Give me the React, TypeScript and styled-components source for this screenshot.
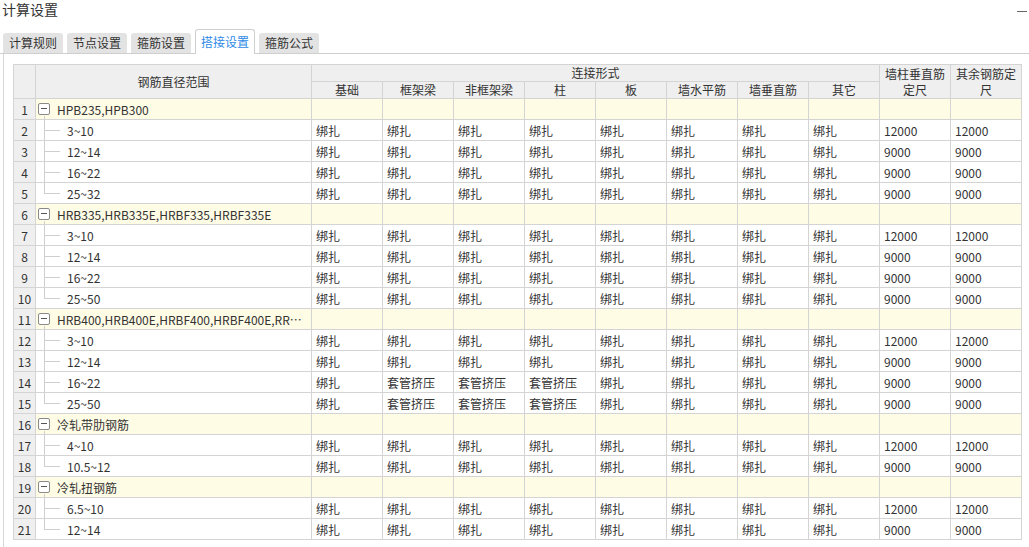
import React from 'react';
import styled, {createGlobalStyle, css} from 'styled-components';

const GlobalStyle = createGlobalStyle`
    html, body {
        margin: 0;
        padding: 0;
        background: #fff;
    }
    body {
        font-family: "Microsoft YaHei", "Noto Sans CJK SC", "Noto Sans", sans-serif;
        color: #333;
    }
`;

const Window = styled.div`
    width: 1029px;
    height: 547px;
    display: flex;
    flex-direction: column;
    overflow: hidden;
`;

const TitleBar = styled.div`
    height: 29px;
    display: flex;
    justify-content: space-between;
    padding-left: 2px;
    font-size: 14px;
    line-height: 18px;
    color: #333;
`;

const MinButton = styled.div`
    width: 10px;
    height: 1px;
    margin: 11px 2px 0 0;
    background: #666;
`;

const TabBar = styled.div`
    height: 24px;
    display: flex;
    align-items: flex-end;
    gap: 4px;
    padding-left: 3px;
    border-bottom: 1px solid #cfcfcf;
`;

const Tab = styled.div<{ $active?: boolean }>`
    height: 20px;
    padding: 0 6px;
    display: flex;
    align-items: center;
    font-size: 12px;
    line-height: 16px;
    background: #e3e3e3;
    color: #333;
    border-radius: 3px 3px 0 0;
    ${p => p.$active && css`
        height: 24px;
        margin-bottom: -1px;
        background: #fff;
        color: #2d8ae6;
        border: 1px solid #cfcfcf;
        border-bottom: none;
        padding: 0 5px;
    `}
`;

const Panel = styled.div`
    flex: 1;
    margin-left: 3px;
    border-left: 1px solid #d6d6d6;
    padding: 10px 0 0 9px;
`;

const Table = styled.table`
    border-collapse: collapse;
    table-layout: fixed;
    width: 1008px;
    font-size: 12px;
    border: 1px solid #d4d4d4;
`;

const HeadRow = styled.tr`
    height: 17px;
`;

const HeadCell = styled.th`
    padding: 0;
    border: 1px solid #d4d4d4;
    background: #efefef;
    font-weight: normal;
    text-align: center;
    line-height: 16px;
    color: #333;
`;

const Row = styled.tr<{ $group?: boolean }>`
    height: 21px;
    background: ${p => (p.$group ? '#fffce6' : '#fff')};
`;

const NumCell = styled.td`
    padding: 0;
    border: 1px solid #d4d4d4;
    background: #efefef;
    text-align: center;
    color: #333;
`;

const Cell = styled.td`
    padding: 0 0 0 4px;
    border: 1px solid #d4d4d4;
    white-space: nowrap;
    overflow: hidden;
    color: #333;
`;

const NameCell = styled.td<{ $group?: boolean; $last?: boolean }>`
    position: relative;
    padding: 0 4px 0 ${p => (p.$group ? 21 : 31)}px;
    border: 1px solid #d4d4d4;
    white-space: nowrap;
    overflow: hidden;
    text-overflow: ellipsis;
    color: #333;
    ${p => p.$group ? css`
        &::after {
            content: '';
            position: absolute;
            left: 8px;
            top: 17px;
            bottom: 0;
            border-left: 1px solid #cfcfcf;
        }
    ` : css`
        &::before {
            content: '';
            position: absolute;
            left: 8px;
            top: 0;
            ${p.$last ? 'height: 10px;' : 'bottom: 0;'}
            border-left: 1px solid #cfcfcf;
        }
        &::after {
            content: '';
            position: absolute;
            left: 8px;
            top: 10px;
            width: 16px;
            border-top: 1px solid #cfcfcf;
        }
    `}
`;

const Toggle = styled.span`
    position: absolute;
    left: 2px;
    top: 4px;
    width: 10px;
    height: 10px;
    border: 1px solid #8a8a8a;
    border-radius: 2px;
    background: #fff;
    &::before {
        content: '';
        position: absolute;
        left: 2px;
        right: 2px;
        top: 4px;
        border-top: 1px solid #555;
    }
`;

const kinds = ['基础', '框架梁', '非框架梁', '柱', '板', '墙水平筋', '墙垂直筋', '其它'];

type Item = { range: string; types?: string[]; len: string };
type Group = { name: string; items: Item[] };

const SLEEVE = ['绑扎', '套管挤压', '套管挤压', '套管挤压', '绑扎', '绑扎', '绑扎', '绑扎'];

const groups: Group[] = [
    {
        name: 'HPB235,HPB300',
        items: [
            {range: '3~10', len: '12000'},
            {range: '12~14', len: '9000'},
            {range: '16~22', len: '9000'},
            {range: '25~32', len: '9000'},
        ],
    },
    {
        name: 'HRB335,HRB335E,HRBF335,HRBF335E',
        items: [
            {range: '3~10', len: '12000'},
            {range: '12~14', len: '9000'},
            {range: '16~22', len: '9000'},
            {range: '25~50', len: '9000'},
        ],
    },
    {
        name: 'HRB400,HRB400E,HRBF400,HRBF400E,RRB400,RRB400W',
        items: [
            {range: '3~10', len: '12000'},
            {range: '12~14', len: '9000'},
            {range: '16~22', len: '9000', types: SLEEVE},
            {range: '25~50', len: '9000', types: SLEEVE},
        ],
    },
    {
        name: '冷轧带肋钢筋',
        items: [
            {range: '4~10', len: '12000'},
            {range: '10.5~12', len: '9000'},
        ],
    },
    {
        name: '冷轧扭钢筋',
        items: [
            {range: '6.5~10', len: '12000'},
            {range: '12~14', len: '9000'},
        ],
    },
];

const tabs = ['计算规则', '节点设置', '箍筋设置', '搭接设置', '箍筋公式'];

export default function App() {
    let n = 0;
    const rows: React.ReactNode[] = [];
    groups.forEach(g => {
        n++;
        rows.push(
            <Row key={'g' + n} $group>
                <NumCell>{n}</NumCell>
                <NameCell $group><Toggle/>{g.name}</NameCell>
                {Array.from({length: 10}).map((_, i) => <Cell key={i}/>)}
            </Row>
        );
        g.items.forEach((it, idx) => {
            n++;
            const types = it.types || kinds.map(() => '绑扎');
            rows.push(
                <Row key={'r' + n}>
                    <NumCell>{n}</NumCell>
                    <NameCell $last={idx === g.items.length - 1}>{it.range}</NameCell>
                    {types.map((t, i) => <Cell key={i}>{t}</Cell>)}
                    <Cell>{it.len}</Cell>
                    <Cell>{it.len}</Cell>
                </Row>
            );
        });
    });

    return (
        <Window>
            <GlobalStyle/>
            <TitleBar>
                <span>计算设置</span>
                <MinButton/>
            </TitleBar>
            <TabBar>
                {tabs.map(t => <Tab key={t} $active={t === '搭接设置'}>{t}</Tab>)}
            </TabBar>
            <Panel>
                <Table>
                    <colgroup>
                        <col style={{width: 22}}/>
                        <col style={{width: 276}}/>
                        {Array.from({length: 10}).map((_, i) => <col key={i} style={{width: 71}}/>)}
                    </colgroup>
                    <thead>
                    <HeadRow>
                        <HeadCell rowSpan={2}/>
                        <HeadCell rowSpan={2}>钢筋直径范围</HeadCell>
                        <HeadCell colSpan={8}>连接形式</HeadCell>
                        <HeadCell rowSpan={2}>墙柱垂直筋定尺</HeadCell>
                        <HeadCell rowSpan={2}>其余钢筋定尺</HeadCell>
                    </HeadRow>
                    <HeadRow>
                        {kinds.map(k => <HeadCell key={k}>{k}</HeadCell>)}
                    </HeadRow>
                    </thead>
                    <tbody>{rows}</tbody>
                </Table>
            </Panel>
        </Window>
    );
}
